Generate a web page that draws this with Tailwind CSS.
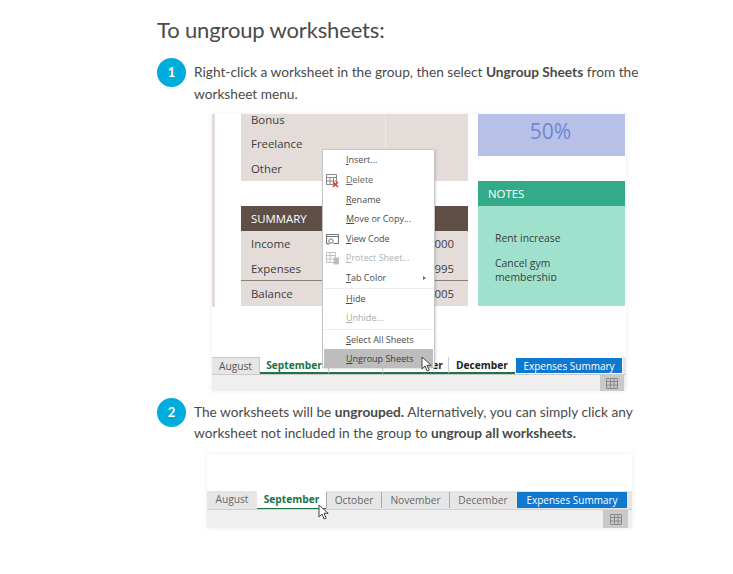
<!DOCTYPE html>
<html lang="en">
<head>
<meta charset="UTF-8">
<title>To ungroup worksheets</title>
<script src="https://cdn.jsdelivr.net/npm/@tailwindcss/browser@4"></script>
</head>
<body class="bg-white font-['Lato','Liberation_Sans',sans-serif] text-[#4a4a4a] overflow-hidden">
<main class="w-[733px] h-[574px] pl-[157px] pt-[16px]">
  <h2 class="text-[22px] tracking-[-0.15px] leading-[28px] h-[42px]">To ungroup worksheets:</h2>

  <!-- step 1 -->
  <div class="flex gap-[8px] h-[56px]">
    <div class="w-[29px] h-[29px] rounded-full bg-[#00acdc] text-white text-[13px] font-bold flex items-center justify-center shrink-0">1</div>
    <p class="w-[460px] text-[13.7px] leading-[22px] pt-[3px]">Right-click a worksheet in the group, then select <b>Ungroup Sheets</b> from the worksheet menu.</p>
  </div>

  <!-- excel shot 1 -->
  <div class="relative ml-[55px] w-[414px] h-[277px] shadow-[0_0_5px_rgba(0,0,0,0.08)] font-['Open_Sans',sans-serif] flex flex-col text-[#3c3c3c]">
    <div class="flex h-[193px] overflow-hidden">
      <div class="w-[3px] h-full bg-[#e4dcd9]"></div>
      <div class="w-[26px]"></div>
      <div class="w-[227px] text-[11.4px]">
        <div class="h-[67px] bg-[#e4dcd9] relative overflow-hidden">
          <div class="absolute left-[144px] top-0 bottom-0 w-px bg-[#eee8e6]"></div>
          <div class="h-[17px] pl-[10px] leading-[11px]">Bonus</div>
          <div class="h-[25px] pl-[10px] leading-[25px]">Freelance</div>
          <div class="h-[25px] pl-[10px] leading-[25px]">Other</div>
        </div>
        <div class="h-[25px]"></div>
        <div class="h-[25px] bg-[#5f4f47] text-white pl-[10px] leading-[25px]">SUMMARY</div>
        <div class="h-[25px] bg-[#e4dcd9] px-[10px] pr-[14px] leading-[25px] flex justify-between"><span>Income</span><span>000</span></div>
        <div class="h-[25px] bg-[#e4dcd9] px-[10px] pr-[14px] leading-[25px] flex justify-between border-b border-[#8a7d77]"><span>Expenses</span><span>995</span></div>
        <div class="h-[25px] bg-[#e4dcd9] px-[10px] pr-[14px] leading-[25px] flex justify-between"><span>Balance</span><span>005</span></div>
      </div>
      <div class="w-[10px]"></div>
      <div class="w-[147px] flex flex-col">
        <div class="h-[42px] bg-[#b7c1e8] text-[#6f86d2] text-[21px] flex items-center justify-center pb-[6px] pr-[2px]">50%</div>
        <div class="h-[25px]"></div>
        <div class="h-[25px] bg-[#33ab8b] text-white text-[11.4px] leading-[25px] pl-[10px]">NOTES</div>
        <div class="h-[100px] bg-[#a0e1cd] pl-[17px] pt-[25px] text-[10.4px]">
          <div class="h-[25px] leading-[15px]">Rent increase</div>
          <div class="h-[25px] w-[90px] leading-[14px] overflow-hidden">Cancel gym membership</div>
        </div>
      </div>
    </div>
    <div class="h-[50px]"></div>
    <div class="flex h-[18px] text-[10.2px] leading-[16px] border-b border-[#c9c9c9] bg-[#e6e6e6]">
      <div class="w-[48px] text-center text-[#555] border-t border-r border-[#c9c9c9]">August</div>
      <div class="w-[68px] text-center font-bold text-[#217346] bg-white border-b-2 border-[#217346]">September</div>
      <div class="w-[54px] bg-white border-b-2 border-[#217346] border-l border-l-[#ccc]"></div>
      <div class="w-[66px] text-right pr-[5px] font-bold text-[#222] bg-white border-b-2 border-[#217346] border-l border-l-[#ccc]">er</div>
      <div class="w-[67px] text-center font-bold text-[#222] bg-white border-b-2 border-[#217346] border-l border-l-[#ccc]">December</div>
      <div class="w-[108px] text-center text-[10px] text-white bg-[#0f78cf] border border-white">Expenses Summary</div>
    </div>
    <div class="h-[16px] bg-[#efefef] flex justify-end pr-[2px]">
      <div class="w-[24px] bg-[#c9c9c9] flex items-center justify-center">
        <svg width="12" height="11" viewBox="0 0 12 11" fill="none" stroke="#8a8a8a"><path d="M.5 .5h11v10H.5zM.5 3.5h11M.5 7h11M4.5 .5v10M8 .5v10"/></svg>
      </div>
    </div>

    <!-- context menu -->
    <div class="absolute left-[110px] top-[35px] w-[113px] h-[219px] bg-white border border-[#c6c6c6] shadow-[1px_1px_2px_rgba(0,0,0,0.15)] text-[9px] text-[#4a4a4a]">
      <div class="h-[21px] pl-[23px] leading-[20px]"><u>I</u>nsert...</div>
      <div class="h-[19px] pl-[23px] leading-[18px] text-[#666] relative">
        <svg class="absolute left-[3px] top-[3px]" width="14" height="14" viewBox="0 0 14 14" fill="none"><path d="M.5 .5h10v10H.5zM.5 3.5h10M.5 7h10M4 3.5v7M7.5 3.500v7" stroke="#8a8a8a"/><path d="M7 8l5 5M12 8l-5 5" stroke="#d8402f" stroke-width="1.5"/></svg>
        <u>D</u>elete
      </div>
      <div class="h-[20px] pl-[23px] leading-[19px]"><u>R</u>ename</div>
      <div class="h-[19px] pl-[23px] leading-[18px]"><u>M</u>ove or Copy...</div>
      <div class="h-[20px] pl-[23px] leading-[19px] relative">
        <svg class="absolute left-[3px] top-[4px]" width="13" height="13" viewBox="0 0 13 13" fill="none" stroke="#6f7478"><path d="M.5 1.5h12v9h-5"/><path d="M.5 1.5v9h2M.5 3.5h12" /><circle cx="5" cy="8" r="2.2"/><path d="M3.5 10l-2 2"/></svg>
        <u>V</u>iew Code
      </div>
      <div class="h-[19px] pl-[23px] leading-[18px] text-[#b0b0b0] relative">
        <svg class="absolute left-[3px] top-[3px]" width="13" height="13" viewBox="0 0 13 13" fill="none" stroke="#c2c2c2"><path d="M.5 .5h9v10h-9zM.5 3.5h9M.5 7h9M4 .5v10"/><rect x="8" y="6" width="4.5" height="6" fill="#bbb"/></svg>
        <u>P</u>rotect Sheet...
      </div>
      <div class="h-[20px] pl-[23px] leading-[20px] flex justify-between pr-[8px] items-center"><span><u>T</u>ab Color</span><span class="w-0 h-0 border-y-[2.5px] border-y-transparent border-l-[3px] border-l-[#666]"></span></div>
      <div class="h-[20px] pl-[23px] leading-[20px] border-t border-[#eeeeee]"><u>H</u>ide</div>
      <div class="h-[21px] pl-[23px] leading-[20px] text-[#aaaaaa]"><u>U</u>nhide...</div>
      <div class="h-[20px] pl-[23px] leading-[19px] border-t border-[#eeeeee]"><u>S</u>elect All Sheets</div>
      <div class="h-[19px] pl-[22px] leading-[20px] bg-[#bdbdbd] mx-[1px] text-[#3c3c3c]"><u>U</u>ngroup Sheets</div>
    </div>
    <svg class="absolute left-[209px] top-[242px]" width="12" height="17" viewBox="0 0 12 17"><path d="M1 1v12l3-3 2.200 5 2-.9L6 9.300h4.200z" fill="#fff" stroke="#444" stroke-width="1"/></svg>
  </div>

  <!-- step 2 -->
  <div class="flex gap-[8px] h-[56px] mt-[7px]">
    <div class="w-[29px] h-[29px] rounded-full bg-[#00acdc] text-white text-[13px] font-bold flex items-center justify-center shrink-0">2</div>
    <p class="w-[460px] text-[13.7px] leading-[21px] pt-[3px]">The worksheets will be <b>ungrouped.</b> Alternatively, you can simply click any worksheet not included in the group to <b>ungroup all worksheets.</b></p>
  </div>

  <!-- excel shot 2 -->
  <div class="relative ml-[50px] w-[425px] h-[74px] shadow-[0_0_5px_rgba(0,0,0,0.08)] font-['Open_Sans',sans-serif] flex flex-col">
    <div class="h-[37px]"></div>
    <div class="flex h-[19px] bg-[#e6e6e6] text-[10.2px] leading-[16px] text-[#666] border-b border-[#d0d0d0]">
      <div class="w-[50px] text-center">August</div>
      <div class="w-[69px] text-center font-bold text-[#217346] bg-white border-b border-[#217346]">September</div>
      <div class="w-[55px] text-center border-l border-[#aaaaaa] my-[1px]">October</div>
      <div class="w-[68px] text-center border-l border-[#aaaaaa] my-[1px]">November</div>
      <div class="w-[67px] text-center border-l border-[#aaaaaa] my-[1px]">December</div>
      <div class="w-[110px] ml-[1px] text-center text-[10px] text-white bg-[#0f78cf] my-[1px]">Expenses Summary</div>
    </div>
    <div class="h-[18px] bg-[#efefef] flex justify-end pr-[4px]">
      <div class="w-[25px] bg-[#c9c9c9] flex items-center justify-center">
        <svg width="12" height="11" viewBox="0 0 12 11" fill="none" stroke="#8a8a8a"><path d="M.5 .5h11v10H.5zM.5 3.500h11M.5 7h11M4.500 .5v10M8 .5v10"/></svg>
      </div>
    </div>
    <svg class="absolute left-[111px] top-[50px]" width="12" height="17" viewBox="0 0 12 17"><path d="M1 1v12l3-3 2.200 5 2-.9L6 9.300h4.200z" fill="#fff" stroke="#444" stroke-width="1"/></svg>
  </div>
</main>
</body>
</html>
